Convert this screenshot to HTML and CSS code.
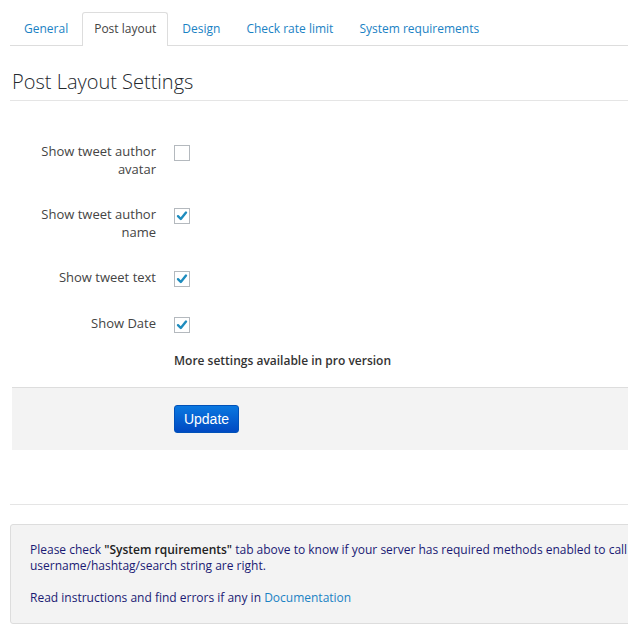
FILE: index.html
```html
<!DOCTYPE html>
<html>
<head>
<meta charset="utf-8">
<link rel="stylesheet" href="styles.css">
</head>
<body>
<div class="wrap">
  <nav class="tabs">
    <a class="tab">General</a>
    <a class="tab active">Post layout</a>
    <a class="tab">Design</a>
    <a class="tab">Check rate limit</a>
    <a class="tab">System requirements</a>
  </nav>
  <h2 class="title">Post Layout Settings</h2>
  <div class="form">
    <div class="row">
      <div class="label">Show tweet author<br>avatar</div>
      <div class="field"><span class="cb"></span></div>
    </div>
    <div class="row">
      <div class="label">Show tweet author<br>name</div>
      <div class="field"><span class="cb"><svg viewBox="0 0 14 14" width="14" height="14"><path d="M3 7.2 L5.8 10 L11 3.6" fill="none" stroke="#1e8cbe" stroke-width="2.4" stroke-linecap="round" stroke-linejoin="round"/></svg></span></div>
    </div>
    <div class="row">
      <div class="label">Show tweet text</div>
      <div class="field"><span class="cb"><svg viewBox="0 0 14 14" width="14" height="14"><path d="M3 7.2 L5.8 10 L11 3.6" fill="none" stroke="#1e8cbe" stroke-width="2.4" stroke-linecap="round" stroke-linejoin="round"/></svg></span></div>
    </div>
    <div class="row">
      <div class="label">Show Date</div>
      <div class="field"><span class="cb"><svg viewBox="0 0 14 14" width="14" height="14"><path d="M3 7.2 L5.8 10 L11 3.6" fill="none" stroke="#1e8cbe" stroke-width="2.4" stroke-linecap="round" stroke-linejoin="round"/></svg></span></div>
    </div>
    <p class="more">More settings available in pro version</p>
  </div>
  <div class="submit">
    <button class="btn">Update</button>
  </div>
  <hr class="sep">
  <div class="notice">
    <p>Please check <b>"System rquirements"</b> tab above to know if your server has required methods enabled to call api and check if username/hashtag/search string are right.</p>
    <p>Read instructions and find errors if any in <a class="doc">Documentation</a></p>
  </div>
</div>
</body>
</html>
```
FILE: styles.css
```css
html, body {
  margin: 0;
  padding: 0;
  overflow: hidden;
  background: #fff;
}
body {
  font-family: "Open Sans", "Noto Sans", sans-serif;
  font-size: 13px;
  color: #333;
}
.wrap {
  width: 790px;
  padding-left: 10px;
}
.tabs {
  display: flex;
  height: 33px;
  padding-top: 12px;
  border-bottom: 1px solid #dddddd;
  font-size: 12px;
}
.tab {
  display: block;
  padding: 0 11px;
  margin-left: 2px;
  line-height: 31px;
  color: #1a82c4;
  border: 1px solid transparent;
  border-bottom: none;
  border-radius: 3px 3px 0 0;
}
.tab.active {
  color: #444;
  border-color: #dddddd;
  background: #fff;
  height: 33px;
  margin-bottom: -1px;
}
.title {
  margin: 22px 0 0 0;
  padding: 0 0 4px 2px;
  font-size: 20px;
  font-weight: 300;
  line-height: 28px;
  color: #23282d;
  border-bottom: 1px solid #e5e5e5;
}
.form {
  padding-top: 28px;
}
.row {
  display: flex;
  padding: 14px 0;
}
.label {
  width: 146px;
  text-align: right;
  line-height: 17.5px;
  color: #444;
}
.field {
  padding-left: 18px;
  padding-top: 2px;
}
.cb {
  display: flex;
  align-items: center;
  justify-content: center;
  width: 14px;
  height: 14px;
  border: 1px solid #b4b9be;
  background: #fff;
}
.more {
  margin: 5px 0 0 164px;
  line-height: 18px;
  font-size: 12px;
  font-weight: 600;
  color: #333;
}
.submit {
  margin-top: 17px;
  margin-left: 2px;
  border-top: 1px solid #dddddd;
  background: #f3f3f3;
  height: 63px;
  padding-left: 162px;
  box-sizing: border-box;
  padding-top: 17px;
}
.btn {
  display: block;
  width: 65px;
  height: 28px;
  padding: 0;
  border: 1px solid #0051b8;
  border-radius: 3px;
  background: linear-gradient(#0a78e0, #0049c2);
  color: #fff;
  font-family: "Liberation Sans", Arial, sans-serif;
  font-size: 14px;
  line-height: 26px;
}
.sep {
  margin: 54px 0 0 0;
  border: none;
  border-top: 1px solid #e5e5e5;
  height: 0;
}
.notice {
  margin-top: 19px;
  border: 1px solid #dddddd;
  border-radius: 3px;
  background: #f3f3f3;
  padding: 17px 19px 17px 19px;
  color: #1a1a73;
  font-size: 12px;
  line-height: 16px;
}
.notice p {
  margin: 0 0 16px 0;
}
.notice p:last-child { margin-bottom: 0; }
.notice b {
  font-weight: 600;
  color: #222;
}
.doc {
  color: #1a82c4;
}
```
